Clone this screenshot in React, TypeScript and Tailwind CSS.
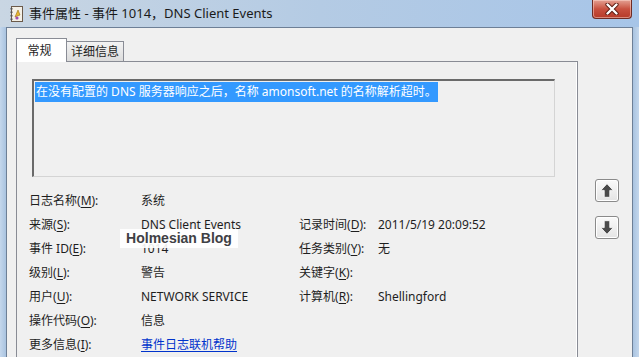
import React from "react";

const font = { fontFamily: '"Noto Sans", "Noto Sans CJK SC", sans-serif' };

function Key({ label, k, tail = "):" }: { label: string; k: string; tail?: string }) {
  return (
    <span>
      {label}(<span className="underline underline-offset-2">{k}</span>
      {tail}
    </span>
  );
}

function EventIcon() {
  return (
    <svg width="14" height="16" viewBox="0 0 14 16">
      <rect x="1.5" y="0.5" width="11" height="15" fill="#f4f0e6" stroke="#6b5a4a" />
      <rect x="0.5" y="2" width="2" height="1.5" fill="#555" />
      <rect x="0.5" y="5.5" width="2" height="1.5" fill="#555" />
      <rect x="0.5" y="9" width="2" height="1.5" fill="#555" />
      <rect x="0.5" y="12.5" width="2" height="1.5" fill="#555" />
      <path d="M5 11 L8 4 L10 9 Z" fill="#e8b830" stroke="#9a6b10" strokeWidth="0.6" />
      <circle cx="7" cy="12" r="1.6" fill="#a050b0" />
    </svg>
  );
}

function ArrowButton({ dir }: { dir: "up" | "down" }) {
  return (
    <button className="flex h-[23px] w-[24px] items-center justify-center rounded-[3px] border border-[#8a8a8a] bg-gradient-to-b from-[#fafafa] to-[#e4e4e4] shadow-[inset_0_0_0_1px_#ffffff]">
      <svg width="14" height="15" viewBox="0 0 12 13" className={dir === "down" ? "rotate-180" : ""}>
        <path
          d="M6 0.6 L11.4 6.4 L8.4 6.4 L8.4 12.4 L3.6 12.4 L3.6 6.4 L0.6 6.4 Z"
          fill="#4a4a4a"
          stroke="#ffffff"
          strokeWidth="0.7"
          strokeLinejoin="round"
        />
      </svg>
    </button>
  );
}

const rows: [React.ReactNode, React.ReactNode, React.ReactNode?, React.ReactNode?][] = [
  [<Key label="日志名称" k="M" />, "系统"],
  [<Key label="来源" k="S" />, "DNS Client Events", <Key label="记录时间" k="D" />, "2011/5/19 20:09:52"],
  [<Key label="事件 ID" k="E" />, "1014", <Key label="任务类别" k="Y" />, "无"],
  [<Key label="级别" k="L" />, "警告", <Key label="关键字" k="K" />, ""],
  [<Key label="用户" k="U" />, "NETWORK SERVICE", <Key label="计算机" k="R" />, "Shellingford"],
  [<Key label="操作代码" k="O" />, "信息"],
  [
    <Key label="更多信息" k="I" />,
    <span className="text-[#0033cc] underline underline-offset-2">事件日志联机帮助</span>,
  ],
];

export default function App() {
  return (
    <div
      className="relative flex h-[357px] w-[639px] flex-col overflow-hidden bg-[#b7cde6] text-[12px] text-[#1e1e1e]"
      style={font}
    >
      {/* title bar */}
      <div className="flex h-[27px] shrink-0 items-center bg-gradient-to-r from-[#c9d6e3] via-[#b4cbe4] to-[#a7c5e8] pl-[10px]">
        <EventIcon />
        <span className="ml-[5px] text-[13px] text-[#1a1a1a]">事件属性 - 事件 1014，DNS Client Events</span>
      </div>
      <div className="absolute right-[7px] top-0 flex h-[19px] w-[40px] items-center justify-center rounded-b-[4px] border border-t-0 border-[#6e2b24] bg-gradient-to-b from-[#e3a093] via-[#c8503f] to-[#b63a28] shadow-[inset_0_0_0_1px_rgba(255,220,210,0.5)]">
        <svg width="14" height="12" viewBox="0 0 14 12">
          <path d="M2.5 1.5 L11.5 10.5 M11.5 1.5 L2.5 10.5" stroke="#5a1a10" strokeWidth="4.2" strokeLinecap="round" />
          <path d="M2.5 1.5 L11.5 10.5 M11.5 1.5 L2.5 10.5" stroke="#ffffff" strokeWidth="2.4" strokeLinecap="round" />
        </svg>
      </div>

      {/* window body */}
      <div className="flex min-h-0 flex-1">
        <div className="w-[6px] shrink-0 bg-gradient-to-r from-[#c4d7ec] to-[#a9c3e0]" />
        <div className="flex flex-1 border-l border-r border-t border-[#6d7f96] bg-[#f0f0f0] pl-[9px] pt-[9px]">
          {/* tabs + panel */}
          <div className="flex w-[562px] shrink-0 flex-col">
            <div className="flex h-[24px] items-end">
              <div className="relative z-10 -mb-px flex h-[24px] w-[51px] items-center justify-center border border-b-0 border-[#898c95] bg-white pr-[4px] text-[12px]">
                常规
              </div>
              <div className="flex h-[20px] w-[57px] items-center justify-center border border-b-0 border-l-0 border-[#898c95] bg-gradient-to-b from-[#f3f3f3] to-[#dcdcdc] text-[12px]">
                详细信息
              </div>
            </div>
            <div className="flex-1 border border-b-0 border-[#898c95] bg-[#f0f0f0] pl-[12px] pt-[17px] shadow-[inset_-1px_0_0_#ffffff]">
              <div className="ml-[3px] h-[98px] w-[523px] border-b border-l-2 border-r border-t-2 border-b-[#d4d4d4] border-l-[#6a6a6a] border-r-[#d4d4d4] border-t-[#6a6a6a] bg-[#f0f0f0] pl-px pt-[1px]">
                <span className="inline-block bg-[#3399ff] px-px leading-[20px] text-white">
                  在没有配置的 DNS 服务器响应之后，名称 amonsoft.net 的名称解析超时。
                </span>
              </div>
              <div className="mt-[12px] grid grid-cols-[112px_158px_79px_1fr] auto-rows-[24px] items-center">
                {rows.map((r, i) => (
                  <React.Fragment key={i}>
                    <div>{r[0]}</div>
                    <div>{r[1]}</div>
                    <div>{r[2] ?? ""}</div>
                    <div>{r[3] ?? ""}</div>
                  </React.Fragment>
                ))}
              </div>
            </div>
          </div>
          {/* up / down */}
          <div className="ml-[17px] flex flex-col gap-[14px] pt-[142px]">
            <ArrowButton dir="up" />
            <ArrowButton dir="down" />
          </div>
        </div>
        <div className="w-[6px] shrink-0 bg-gradient-to-r from-[#a9c3e0] to-[#c4d7ec]" />
      </div>

      {/* watermark */}
      <div
        className="absolute left-[120px] top-[229px] flex h-[19px] w-[118px] items-center justify-center whitespace-nowrap bg-white/90 text-[14px] font-bold text-[#3f4044]"
        style={{ fontFamily: '"Liberation Sans", sans-serif' }}
      >
        Holmesian Blog
      </div>
    </div>
  );
}
